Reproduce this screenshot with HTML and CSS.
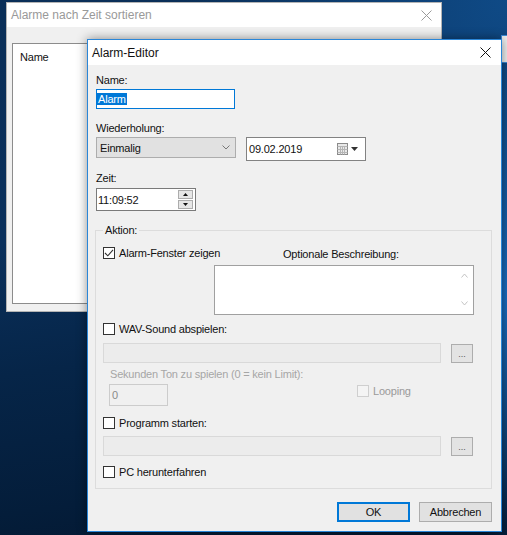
FILE: index.html
```html
<!DOCTYPE html>
<html lang="de">
<head>
<meta charset="utf-8">
<title>Alarm-Editor</title>
<link rel="stylesheet" href="styles.css">
</head>
<body>
<div class="desktop">
  <div class="side-win"></div>
  <div class="bg-win">
    <div class="bg-title">
      <span>Alarme nach Zeit sortieren</span>
      <svg class="x-icon" width="11" height="11" viewBox="0 0 11 11"><path d="M0.5 0.5 L10.5 10.5 M10.5 0.5 L0.5 10.5" stroke="#9a9a9a" stroke-width="1" fill="none"/></svg>
    </div>
    <div class="bg-body">
      <div class="listview"><div class="lv-head">Name</div></div>
    </div>
  </div>

  <div class="dialog">
    <div class="dlg-title">
      <span>Alarm-Editor</span>
      <svg class="x-icon" width="11" height="11" viewBox="0 0 11 11"><path d="M0.5 0.5 L10.5 10.5 M10.5 0.5 L0.5 10.5" stroke="#111" stroke-width="1" fill="none"/></svg>
    </div>
    <div class="dlg-body">
      <div class="lbl">Name:</div>
      <div class="input name-input"><span class="sel">Alarm</span></div>

      <div class="lbl lbl-gap">Wiederholung:</div>
      <div class="row">
        <div class="select">
          <span>Einmalig</span>
          <svg width="8" height="5" viewBox="0 0 8 5"><path d="M0.5 0.5 L4 4 L7.5 0.5" stroke="#777" stroke-width="1" fill="none"/></svg>
        </div>
        <div class="input date">
          <span>09.02.2019</span>
          <span class="date-icons">
            <svg width="11" height="12" viewBox="0 0 11 12"><rect x="0.5" y="0.5" width="10" height="11" fill="#e9e9e9" stroke="#8a8a8a"/><path d="M0.5 3.5 H10.5 M0.5 6.5 H10.5 M0.5 9.5 H10.5 M3.5 3.5 V11.5 M5.5 3.5 V11.5 M7.5 3.5 V11.5" stroke="#b5b5b5" stroke-width="1" fill="none"/></svg>
            <svg width="7" height="4" viewBox="0 0 7 4"><path d="M0 0 H7 L3.5 4 Z" fill="#333"/></svg>
          </span>
        </div>
      </div>

      <div class="lbl lbl-gap2">Zeit:</div>
      <div class="input time">
        <span>11:09:52</span>
        <span class="spin">
          <span class="sp"><svg width="5" height="3" viewBox="0 0 5 3"><path d="M0 3 H5 L2.5 0 Z" fill="#111"/></svg></span>
          <span class="sp"><svg width="5" height="3" viewBox="0 0 5 3"><path d="M0 0 H5 L2.5 3 Z" fill="#111"/></svg></span>
        </span>
      </div>

      <fieldset class="group">
        <legend>Aktion:</legend>
        <div class="act-top">
          <div class="check-row">
            <span class="cb"><svg width="10" height="10" viewBox="0 0 10 10"><path d="M1 5 L3.8 7.8 L9 1.8" stroke="#333" stroke-width="1.1" fill="none"/></svg></span>
            <span>Alarm-Fenster zeigen</span>
          </div>
          <div class="desc">
            <div class="desc-lbl">Optionale Beschreibung:</div>
            <div class="textarea">
              <div class="sb">
                <svg width="7" height="5" viewBox="0 0 7 5"><path d="M0.5 4.5 L3.5 1 L6.5 4.5" stroke="#c4c4c4" stroke-width="1" fill="none"/></svg>
                <svg width="7" height="5" viewBox="0 0 7 5"><path d="M0.5 0.5 L3.5 4 L6.5 0.5" stroke="#c4c4c4" stroke-width="1" fill="none"/></svg>
              </div>
            </div>
          </div>
        </div>

        <div class="check-row gap7"><span class="cb"></span><span>WAV-Sound abspielen:</span></div>
        <div class="path-row">
          <div class="path"></div>
          <div class="dots">...</div>
        </div>
        <div class="sec-lbl">Sekunden Ton zu spielen (0 = kein Limit):</div>
        <div class="sec-row">
          <div class="num">0</div>
          <div class="check-row disabled loop"><span class="cb"></span><span>Looping</span></div>
        </div>

        <div class="check-row gap10"><span class="cb"></span><span>Programm starten:</span></div>
        <div class="path-row path2">
          <div class="path"></div>
          <div class="dots">...</div>
        </div>
        <div class="check-row gap9"><span class="cb"></span><span>PC herunterfahren</span></div>
      </fieldset>

      <div class="buttons">
        <div class="btn default">OK</div>
        <div class="btn">Abbrechen</div>
      </div>
    </div>
  </div>
</div>
</body>
</html>
```

FILE: styles.css
```css
* { box-sizing: border-box; }
html, body { margin: 0; padding: 0; }
body {
  width: 507px;
  height: 535px;
  overflow: hidden;
  font-family: "Liberation Sans", Arial, sans-serif;
  font-size: 11px;
  letter-spacing: -0.2px;
  color: #111;
}
.desktop {
  position: relative;
  width: 507px;
  height: 535px;
  overflow: hidden;
  background:
    radial-gradient(ellipse 60px 260px at 100% 55%, #1a6cc0 0%, rgba(26,108,192,0) 100%),
    radial-gradient(ellipse at 100% 0%, #0f4a86 0%, rgba(15,74,134,0) 45%),
    linear-gradient(172deg, #0a2f58 0%, #0a305c 40%, #062548 62%, #041d3a 85%, #03172f 100%);
}

/* partially visible window at the right edge */
.side-win {
  position: absolute;
  left: 501px;
  top: 35px;
  width: 20px;
  height: 28px;
  background: #eeeeee;
  border: 1px solid #3b8ad6;
}

/* background window */
.bg-win {
  position: absolute;
  left: 6px;
  top: 2px;
  width: 436px;
  height: 310px;
  background: #f0f0f0;
  border: 1px solid #b4b4b4;
  display: flex;
  flex-direction: column;
}
.bg-title {
  height: 24px;
  background: #fff;
  color: #999;
  font-size: 12px;
  letter-spacing: 0;
  display: flex;
  align-items: center;
  justify-content: space-between;
  padding: 0 9px 0 4px;
}
.bg-body {
  flex: 1;
  padding: 16px 0 7px 5px;
}
.listview {
  height: 100%;
  background: #fff;
  border: 1px solid #8c8c8c;
  border-right: none;
  padding: 6px 0 0 7px;
}
.lv-head { line-height: 14px; }

/* dialog */
.dialog {
  position: absolute;
  left: 87px;
  top: 39px;
  width: 415px;
  height: 493px;
  background: #f0f0f0;
  border: 1px solid #2a86d8;
  display: flex;
  flex-direction: column;
  box-shadow: 0 0 10px rgba(0,0,0,0.45);
}
.dlg-title {
  height: 25px;
  flex: none;
  background: #fff;
  font-size: 12px;
  letter-spacing: 0;
  display: flex;
  align-items: center;
  justify-content: space-between;
  padding: 0 10px 0 4px;
}
.x-icon { display: block; }
.dlg-body {
  flex: 1;
  padding: 8px 9px 9px 8px;
  display: flex;
  flex-direction: column;
}
.lbl { line-height: 14px; height: 14px; }
.lbl-gap { margin-top: 12px; }
.lbl-gap2 { margin-top: 10px; }

.input {
  border: 1px solid #7a7a7a;
  background: #fff;
  display: flex;
  align-items: center;
  flex: none;
}
.name-input {
  width: 139px;
  height: 20px;
  margin-top: 2px;
  border-color: #0078d7;
  padding-left: 0;
}
.sel {
  background: #0078d7;
  color: #fff;
  line-height: 12px;
  padding: 0 1px;
}
.row {
  display: flex;
  gap: 10px;
  align-items: flex-start;
  margin-top: 2px;
}
.select {
  width: 140px;
  height: 21px;
  border: 1px solid #adadad;
  background: #e1e1e1;
  display: flex;
  align-items: center;
  justify-content: space-between;
  padding: 0 5px 0 3px;
}
.select svg, .date-icons svg { display: block; }
.date {
  width: 120px;
  height: 24px;
  justify-content: space-between;
  padding: 0 7px 0 2px;
  border-color: #828282;
}
.date-icons { display: flex; align-items: center; gap: 3px; }
.time {
  width: 100px;
  height: 23px;
  margin-top: 3px;
  justify-content: space-between;
  padding: 0 2px 0 1px;
}
.spin { display: flex; flex-direction: column; gap: 1px; }
.sp {
  width: 15px;
  height: 9px;
  border: 1px solid #acacac;
  background: #e6e6e6;
  display: flex;
  align-items: center;
  justify-content: center;
}
.sp svg { display: block; }

/* group box */
.group {
  margin: 12px 0 0 -1px;
  padding: 9px 0 9px 7px;
  border: 1px solid #dcdcdc;
  min-width: 0;
}
.group legend {
  padding: 0 2px;
  line-height: 14px;
}
.check-row {
  display: flex;
  align-items: center;
  gap: 4px;
  height: 14px;
  line-height: 14px;
  white-space: nowrap;
}
.cb {
  width: 12px;
  height: 12px;
  flex: none;
  border: 1px solid #333;
  background: #fff;
  display: flex;
  align-items: center;
  justify-content: center;
}
.cb svg { display: block; }
.act-top {
  display: grid;
  grid-template-columns: 111px 260px;
  align-items: start;
}
.desc { margin-top: 1px; }
.desc-lbl { line-height: 14px; padding-left: 69px; margin-bottom: 4px; white-space: nowrap; }
.textarea {
  height: 50px;
  border: 1px solid #a0a0a0;
  background: #fff;
  display: flex;
  justify-content: flex-end;
}
.sb {
  width: 17px;
  display: flex;
  flex-direction: column;
  justify-content: space-between;
  align-items: center;
  padding: 7px 0 8px;
}
.sb svg { display: block; }
.gap7 { margin-top: 7px; }
.gap9 { margin-top: 9px; }
.gap10 { margin-top: 10px; }
.path-row {
  display: flex;
  gap: 10px;
  align-items: flex-start;
  margin-top: 7px;
}
.path2 { margin-top: 6px; }
.path {
  width: 338px;
  height: 20px;
  border: 1px solid #d9d9d9;
  background: #ececec;
}
.dots {
  width: 22px;
  height: 19px;
  margin-top: 1px;
  border: 1px solid #adadad;
  background: #e3e3e3;
  color: #555;
  font-size: 9px;
  letter-spacing: 0;
  text-align: center;
  line-height: 18px;
}
.sec-lbl {
  margin-top: 4px;
  padding-left: 7px;
  line-height: 14px;
  color: #a6a6a6;
}
.sec-row {
  display: flex;
  align-items: flex-start;
  margin-top: 3px;
  padding-left: 6px;
}
.num {
  width: 59px;
  height: 22px;
  border: 1px solid #cccccc;
  background: #f0f0f0;
  color: #8a8a8a;
  padding-left: 2px;
  line-height: 20px;
}
.loop { margin-left: 189px; }
.disabled { color: #9a9a9a; }
.disabled .cb { border-color: #cfcfcf; background: #f4f4f4; }

.buttons {
  margin-top: auto;
  display: flex;
  justify-content: flex-end;
  gap: 9px;
}
.btn {
  width: 73px;
  height: 20px;
  border: 1px solid #adadad;
  background: #e1e1e1;
  display: flex;
  align-items: center;
  justify-content: center;
}
.btn.default { border: 2px solid #0078d7; }
```
